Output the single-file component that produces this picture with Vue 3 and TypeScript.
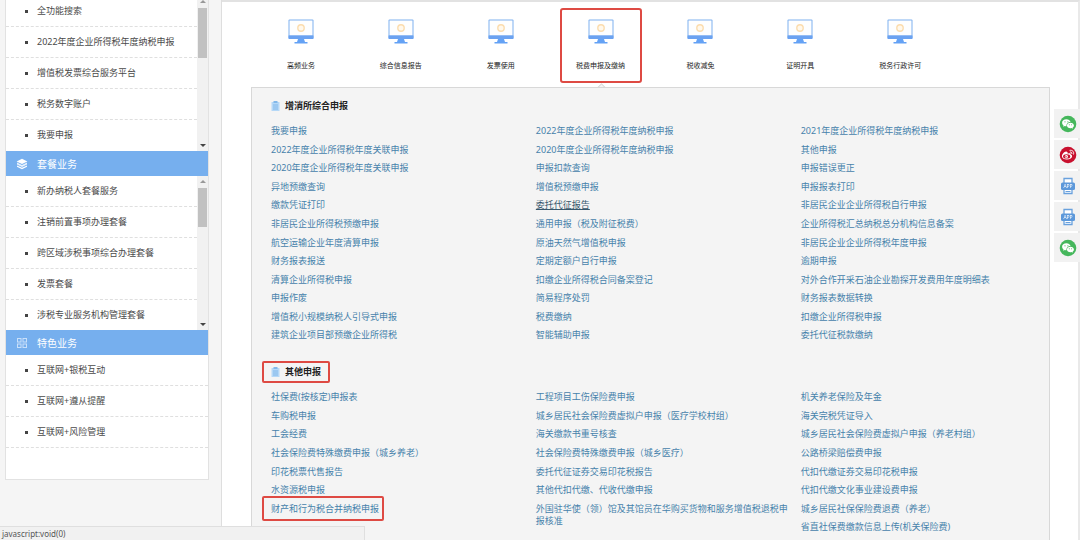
<script setup lang="ts">
import { ref } from 'vue'

interface LinkItem {
  text: string
  state?: 'hover' | 'framed' | 'tall'
}

interface LinkSection {
  title: string
  framed: boolean
  size: 'long' | 'short'
  columns: LinkItem[][]
}

interface MenuGroup {
  key: string
  title?: string
  scroll: boolean
  items: string[]
}

const toItems = (names: string[]): LinkItem[] => names.map((text) => ({ text }))

const groups: MenuGroup[] = [
  {
    key: 'common',
    scroll: true,
    items: ['全功能搜索', '2022年度企业所得税年度纳税申报', '增值税发票综合服务平台', '税务数字账户', '我要申报'],
  },
  {
    key: 'package',
    title: '套餐业务',
    scroll: true,
    items: ['新办纳税人套餐服务', '注销前置事项办理套餐', '跨区域涉税事项综合办理套餐', '发票套餐', '涉税专业服务机构管理套餐'],
  },
  {
    key: 'feature',
    title: '特色业务',
    scroll: false,
    items: ['互联网+银税互动', '互联网+遵从提醒', '互联网+风险管理'],
  },
]

const tabs: string[] = ['高频业务', '综合信息报告', '发票使用', '税费申报及缴纳', '税收减免', '证明开具', '税务行政许可']
const activeTab = ref<number>(3)

const sections: LinkSection[] = [
  {
    title: '增消所综合申报',
    framed: false,
    size: 'long',
    columns: [
      toItems([
        '我要申报', '2022年度企业所得税年度关联申报', '2020年度企业所得税年度关联申报', '异地预缴查询',
        '缴款凭证打印', '非居民企业所得税预缴申报', '航空运输企业年度清算申报', '财务报表报送',
        '清算企业所得税申报', '申报作废', '增值税小规模纳税人引导式申报', '建筑企业项目部预缴企业所得税',
      ]),
      [
        ...toItems(['2022年度企业所得税年度纳税申报', '2020年度企业所得税年度纳税申报', '申报扣款查询', '增值税预缴申报']),
        { text: '委托代征报告', state: 'hover' },
        ...toItems([
          '通用申报（税及附征税费）', '原油天然气增值税申报', '定期定额户自行申报',
          '扣缴企业所得税合同备案登记', '简易程序处罚', '税费缴纳', '智能辅助申报',
        ]),
      ],
      toItems([
        '2021年度企业所得税年度纳税申报', '其他申报', '申报错误更正', '申报报表打印',
        '非居民企业企业所得税自行申报', '企业所得税汇总纳税总分机构信息备案', '非居民企业企业所得税年度申报', '逾期申报',
        '对外合作开采石油企业勘探开发费用年度明细表', '财务报表数据转换', '扣缴企业所得税申报', '委托代征税款缴纳',
      ]),
    ],
  },
  {
    title: '其他申报',
    framed: true,
    size: 'short',
    columns: [
      [
        ...toItems(['社保费(按核定)申报表', '车购税申报', '工会经费', '社会保险费特殊缴费申报（城乡养老）', '印花税票代售报告', '水资源税申报']),
        { text: '财产和行为税合并纳税申报', state: 'framed' },
      ],
      [
        ...toItems([
          '工程项目工伤保险费申报', '城乡居民社会保险费虚拟户申报（医疗学校村组）', '海关缴款书重号核查',
          '社会保险费特殊缴费申报（城乡医疗）', '委托代征证券交易印花税报告', '其他代扣代缴、代收代缴申报',
        ]),
        { text: '外国驻华使（领）馆及其馆员在华购买货物和服务增值税退税申报核准', state: 'tall' },
      ],
      toItems([
        '机关养老保险及年金', '海关完税凭证导入', '城乡居民社会保险费虚拟户申报（养老村组）', '公路桥梁赔偿费申报',
        '代扣代缴证券交易印花税申报', '代扣代缴文化事业建设费申报', '城乡居民社保保险费退费（养老）', '省直社保费缴款信息上传(机关保险费)',
      ]),
    ],
  },
]

const shares: { kind: 'wechat' | 'weibo' | 'app'; label: string }[] = [
  { kind: 'wechat', label: '微信' },
  { kind: 'weibo', label: '微博' },
  { kind: 'app', label: '客户端' },
  { kind: 'app', label: '移动端' },
  { kind: 'wechat', label: '公众号' },
]
</script>

<template>
  <div class="page">
    <aside class="sidebar">
      <nav class="menu">
        <section v-for="group in groups" :key="group.key" :class="['group', group.key]">
          <h2 v-if="group.title" class="group-title">
            <svg v-if="group.key === 'package'" viewBox="0 0 12 12" aria-hidden="true">
              <path d="M6 0.8 11.4 3.4 6 6 0.6 3.4Z" fill="#fff" />
              <path d="M1 4.6v2L6 9l5-2.4v-2L6 7Z" fill="#e6f1fd" />
              <path d="M1 7.4v1.4l5 2.5 5-2.5V7.4L6 9.8Z" fill="#fff" />
            </svg>
            <svg v-else viewBox="0 0 12 12" fill="none" stroke="#c9e0fa" aria-hidden="true">
              <rect x="1.5" y="1.5" width="3.5" height="3.5" />
              <rect x="7" y="1.5" width="3.5" height="3.5" />
              <rect x="1.5" y="7" width="3.5" height="3.5" />
              <rect x="7" y="7" width="3.5" height="3.5" />
            </svg>
            <span>{{ group.title }}</span>
          </h2>
          <div class="group-body">
            <ul class="menu-list">
              <li v-for="item in group.items" :key="item"><a href="#">{{ item }}</a></li>
            </ul>
            <div v-if="group.scroll" class="scrollbar" aria-hidden="true">
              <i class="arrow up"></i>
              <i class="thumb"></i>
              <i class="arrow down"></i>
            </div>
          </div>
        </section>
      </nav>
    </aside>

    <main class="main">
      <div class="tabs">
        <button
          v-for="(tab, i) in tabs"
          :key="tab"
          type="button"
          :class="['tab', { active: i === activeTab }]"
          @click="activeTab = i"
        >
          <svg class="monitor" viewBox="0 0 26 25" aria-hidden="true">
            <rect x="0.5" y="0.5" width="25" height="19.5" rx="1" fill="#7fb1ef" />
            <rect x="1.5" y="1.5" width="23" height="15" fill="#fdfeff" />
            <path d="M0.5 16.5h25V19a1 1 0 0 1-1 1h-23a1 1 0 0 1-1-1Z" fill="#6ba2f1" />
            <path d="M10 20h6l1 3h2.5v1.6h-13V23H9Z" fill="#64a2f5" />
            <circle cx="13" cy="9" r="3.2" fill="#fff8ec" stroke="#fbdcae" stroke-width="1.4" />
          </svg>
          <span>{{ tab }}</span>
        </button>
      </div>

      <div class="panel">
        <section v-for="section in sections" :key="section.title" class="section">
          <h3 :class="['section-title', { framed: section.framed }]">
            <svg viewBox="0 0 9 10" aria-hidden="true">
              <rect x="0.5" y="1" width="8" height="9" fill="#b5d8f7" />
              <rect x="2.5" y="0" width="4" height="2" fill="#82b8ea" />
              <path d="M2 4h5M2 6h5M2 8h5" stroke="#82b8ea" />
            </svg>
            <span>{{ section.title }}</span>
          </h3>
          <div class="columns">
            <ul v-for="(column, c) in section.columns" :key="c" :class="['links', section.size]">
              <li v-for="link in column" :key="link.text" :class="link.state">
                <a href="#">{{ link.text }}</a>
              </li>
            </ul>
          </div>
        </section>
      </div>
    </main>

    <div class="share">
      <button v-for="(share, i) in shares" :key="i" type="button" :aria-label="share.label">
        <svg v-if="share.kind === 'wechat'" viewBox="0 0 18 18" aria-hidden="true">
          <circle cx="9" cy="9" r="8.3" fill="#45b75c" />
          <path d="M7.4 4.2c-2.5 0-4.3 1.5-4.3 3.5 0 1.1.6 2 1.5 2.7l-.4 1.4 1.6-.8c.6.2 1.1.2 1.7.2-.3-2.5 1.6-4.2 4.1-4.2-.5-1.7-2.2-2.8-4.2-2.8Z" fill="#fff" />
          <path d="M11.4 7.7c-2 0-3.5 1.2-3.5 2.8s1.5 2.8 3.5 2.8c.4 0 .9-.1 1.3-.2l1.2.7-.3-1.1c.8-.6 1.3-1.3 1.3-2.2 0-1.6-1.5-2.8-3.5-2.8Z" fill="#fff" />
          <g fill="#45b75c">
            <circle cx="6" cy="6.8" r="0.6" /><circle cx="8.9" cy="6.8" r="0.6" />
            <circle cx="10.3" cy="9.8" r="0.5" /><circle cx="12.6" cy="9.8" r="0.5" />
          </g>
        </svg>
        <svg v-else-if="share.kind === 'weibo'" viewBox="0 0 18 18" aria-hidden="true">
          <circle cx="9" cy="9" r="8.3" fill="#c8102e" />
          <path d="M8.2 6c-.4-1.1-2-.6-3.3.6C3.5 7.9 2.9 9.1 2.9 10.2c0 2 2.4 3.3 4.9 3.3 3.2 0 5.3-1.8 5.3-3.3 0-.9-.8-1.4-1.5-1.6.4-1-.2-1.900-2.900-.9 0 0-.1 0 0-.2.2-.6.1-1.100-.5-1.500Z" fill="#fff" />
          <ellipse cx="7.7" cy="10.4" rx="3.6" ry="2.2" fill="#c8102e" />
          <circle cx="7.4" cy="10.5" r="1.6" fill="#fff" />
          <circle cx="7" cy="10.7" r="0.7" fill="#c8102e" />
          <path d="M11 4.3c2.5-.5 4.3 1.5 3.6 3.8M11.3 6c1.1-.2 1.9.6 1.6 1.7" fill="none" stroke="#fff" stroke-linecap="round" />
        </svg>
        <svg v-else viewBox="0 0 18 18" aria-hidden="true">
          <path d="M5 6V1.5h8V6M5 12v4.5h8V12" fill="#fff" stroke="#69a1dd" stroke-width="1.3" />
          <rect x="2" y="5.5" width="14" height="7.5" rx="1.5" fill="#5c98da" />
          <path d="M6.5 14.5h5" stroke="#69a1dd" />
          <text x="9" y="11" text-anchor="middle" class="app-text">APP</text>
        </svg>
      </button>
    </div>

    <div class="status">javascript:void(0)</div>
  </div>
</template>

<style>
body {
  margin: 0;
  overflow: hidden;
}
</style>

<style scoped>
.page {
  display: flex;
  height: 100vh;
  overflow: hidden;
  background: #f5f5f5;
  color: #4a4a4a;
  font-family: "Noto Sans", "Noto Sans CJK SC", sans-serif;
  font-size: 9px;
  line-height: 12px;
}

a {
  color: inherit;
  text-decoration: none;
}

ul {
  margin: 0;
  padding: 0;
  list-style: none;
}

button {
  padding: 0;
  border: 0;
  background: none;
  color: inherit;
  font: inherit;
  cursor: pointer;
}

.sidebar {
  flex: none;
  box-sizing: border-box;
  width: 222px;
  padding: 0 12px 0 5px;
  border-right: 1px solid #dedede;
}

.menu {
  border: 1px solid #e2e2e2;
  border-top: 0;
  background: #fff;
}

.group-title {
  display: flex;
  align-items: center;
  gap: 9px;
  height: 25px;
  margin: 0;
  padding-left: 10px;
  background: #76afee;
  color: #fff;
  font-size: 10px;
  font-weight: 400;
}

.group-title svg {
  width: 12px;
  height: 12px;
}

.group-body {
  display: flex;
  height: 155px;
  overflow: hidden;
}

.common .group-body {
  align-items: flex-end;
  height: 151px;
}

.package .group-body {
  height: 154px;
}

.feature .group-body {
  height: 124px;
}

.menu-list {
  flex: 1;
}

.menu-list li {
  display: flex;
  align-items: center;
  box-sizing: border-box;
  height: 31px;
  padding-left: 19px;
  border-bottom: 1px dashed #dfdfdf;
}

.menu-list li::before {
  width: 3px;
  height: 3px;
  margin-right: 9px;
  background: #444;
  content: "";
}

.common .menu-list li:last-child,
.package .menu-list li:last-child {
  border-bottom-color: transparent;
}

.scrollbar {
  display: flex;
  flex-direction: column;
  align-items: center;
  box-sizing: border-box;
  width: 11px;
  height: 100%;
  padding: 4px 0;
  background: #f1f1f1;
}

.common .scrollbar {
  padding-top: 0;
}

.arrow {
  border: 3px solid transparent;
}

.arrow.up {
  border-top: 0;
  border-bottom-color: #999;
}

.arrow.down {
  margin-top: auto;
  border-bottom: 0;
  border-top-color: #444;
}

.thumb {
  width: 9px;
  height: 39px;
  margin-top: 5px;
  background: #c1c1c1;
}

.common .thumb {
  height: 50px;
}

.main {
  display: flex;
  flex: 1;
  flex-direction: column;
  min-width: 0;
  padding: 0 28px 0 29px;
  border-top: 2px solid #e2e2e2;
  border-right: 2px solid #e9e9e9;
  background: #fff;
}

.tabs {
  display: grid;
  flex: none;
  grid-template-columns: repeat(8, 1fr);
  height: 79px;
  padding-top: 6px;
}

.tab {
  position: relative;
  display: flex;
  flex-direction: column;
  align-items: center;
  box-sizing: border-box;
  height: 75px;
  margin: 0 9px;
  padding-top: 9px;
  border: 2px solid transparent;
  border-radius: 3px;
  color: #222;
  font-size: 7px;
  white-space: nowrap;
}

.tab.active {
  border-color: #de4a43;
}

.tab.active::after {
  position: absolute;
  top: 75px;
  left: 50%;
  width: 7px;
  height: 7px;
  margin-left: -4px;
  border: 1px solid #d8d8d8;
  background: #f4f4f4;
  content: "";
  transform: rotate(45deg);
}

.monitor {
  flex: none;
  width: 26px;
  height: 25px;
  margin-bottom: 16px;
}

.panel {
  position: relative;
  flex: none;
  min-height: 460px;
  padding: 7px 0 0 19px;
  border: 1px solid #d8d8d8;
  background: #f4f4f4;
}

.section {
  margin-bottom: 16px;
}

.section-title {
  display: flex;
  align-items: center;
  gap: 5px;
  box-sizing: border-box;
  width: fit-content;
  height: 22px;
  margin: 0 0 5px -9px;
  padding: 0 7px;
  border: 2px solid transparent;
  border-radius: 2px;
  color: #222;
  font-size: 9px;
  font-weight: 700;
}

.section-title.framed {
  border-color: #de4a43;
}

.section-title svg {
  width: 9px;
  height: 10px;
}

.columns {
  display: grid;
  grid-template-columns: 16fr 16fr 15fr;
}

.links {
  display: grid;
  color: #4682ab;
}

.links.long {
  grid-template-rows: repeat(12, 1fr);
  height: 223px;
}

.links.short {
  grid-template-rows: repeat(8, 1fr);
  height: 149px;
}

.links li {
  padding: 3px 10px 0 0;
}

.links .tall {
  grid-row: span 2;
}

.links .hover {
  color: #38586d;
}

.links .hover a {
  text-decoration: underline;
}

.links .framed a {
  position: relative;
}

.links .framed a::after {
  position: absolute;
  inset: -6px -5px -6px -9px;
  border: 2px solid #de4a43;
  border-radius: 2px;
  content: "";
}

.share {
  position: fixed;
  top: 109px;
  right: 0;
  display: grid;
  gap: 2px;
}

.share button {
  display: flex;
  align-items: center;
  justify-content: center;
  width: 26px;
  height: 29px;
  padding-left: 2px;
  background: #f2f2f2;
}

.share svg {
  width: 18px;
  height: 18px;
}

.app-text {
  fill: #fff;
  font-size: 5px;
}

.status {
  position: fixed;
  bottom: 0;
  left: 0;
  box-sizing: border-box;
  width: 365px;
  height: 14px;
  padding-left: 2px;
  border: 1px solid #dfdfdf;
  border-width: 1px 1px 0 0;
  background: #f1f1f1;
  color: #555;
  font-size: 8px;
  line-height: 13px;
}
</style>
